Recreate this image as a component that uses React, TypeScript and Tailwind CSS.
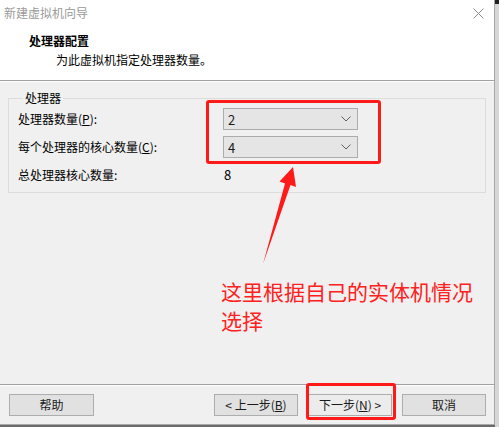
import React from 'react';

const Chevron = () => (
  <svg width="10" height="6" viewBox="0 0 10 6" className="mr-[6px]">
    <path d="M0.5 0.5 L5 5 L9.5 0.5" fill="none" stroke="#606060" strokeWidth="1" />
  </svg>
);

const Select = ({ value }: { value: string }) => (
  <div className="w-[135px] h-[22px] bg-[#e5e5e5] border border-[#acacac] flex items-center justify-between pl-[4px]">
    <span className="text-[13px] leading-none">{value}</span>
    <Chevron />
  </div>
);

const Btn = ({ children, className = '' }: { children: React.ReactNode; className?: string }) => (
  <button className={`w-[84px] h-[22px] border border-[#adadad] bg-[#e1e1e1] text-[12px] leading-none flex items-center justify-center ${className}`}>
    {children}
  </button>
);

const App = () => {
  return (
    <div className="relative w-[499px] h-[427px] flex bg-[#6b6b6b] font-['Microsoft_YaHei','Noto_Sans_CJK_SC',sans-serif] text-[#1a1a1a] overflow-hidden">
      {/* Window */}
      <div className="w-[495px] h-[425px] flex flex-col bg-[#f0f0f0] border-r border-b border-[#a8a8a8]">
        {/* Header */}
        <div className="h-[80px] bg-white flex flex-col">
          <div className="h-[26px] flex items-center justify-between pl-[4px] pr-[10px]">
            <span className="text-[12px] text-[#9a9a9a]">新建虚拟机向导</span>
            <svg width="11" height="11" viewBox="0 0 11 11">
              <path d="M0.5 0.5 L10.5 10.5 M10.5 0.5 L0.5 10.5" stroke="#8a8a8a" strokeWidth="1" />
            </svg>
          </div>
          <div className="pl-[29px] pt-[7px] text-[12px] leading-[16px] font-bold text-black">处理器配置</div>
          <div className="pl-[56px] mt-[3px] text-[12px] leading-[16px] text-black">为此虚拟机指定处理器数量。</div>
        </div>
        <div className="h-[1px] bg-[#a0a0a0]" />
        <div className="h-[1px] bg-white" />

        {/* Body */}
        <div className="flex-1 flex flex-col">
          <fieldset className="mt-[8px] mx-[8px] border border-[#dcdcdc] pl-[9px] pt-[2px] pb-[6px] flex flex-col gap-[6px]">
            <legend className="ml-[5px] px-[2px] text-[12px] leading-[16px] text-black">处理器</legend>
            <div className="h-[22px] flex items-center">
              <span className="w-[205px] text-[12px] text-black">
                处理器数量(<span className="underline">P</span>):
              </span>
              <Select value="2" />
            </div>
            <div className="h-[22px] flex items-center">
              <span className="w-[205px] text-[12px] text-black">
                每个处理器的核心数量(<span className="underline">C</span>):
              </span>
              <Select value="4" />
            </div>
            <div className="h-[22px] flex items-center">
              <span className="w-[205px] text-[12px] text-black">总处理器核心数量:</span>
              <span className="pl-[1px] text-[13px] text-black">8</span>
            </div>
          </fieldset>

          <div className="mt-[84px] pl-[221px] text-[21px] leading-[29px] text-[#ff2020]">
            这里根据自己的实体机情况
            <br />
            选择
          </div>

          <div className="flex-1" />

          {/* Footer */}
          <div className="h-[1px] bg-[#a0a0a0]" />
          <div className="h-[1px] bg-white" />
          <div className="flex items-center pl-[9px] pr-[8px] pt-[8px] pb-[8px]">
            <Btn className="w-[85px]">帮助</Btn>
            <div className="flex-1" />
            <Btn>
              &lt; 上一步(<span className="underline">B</span>)
            </Btn>
            <Btn className="ml-[10px] bg-[#ececec] border-[#0078d7]">
              下一步(<span className="underline">N</span>) &gt;
            </Btn>
            <Btn className="ml-[10px]">取消</Btn>
          </div>
        </div>
      </div>
      {/* Right strip of the desktop behind */}
      <div className="w-[4px] h-full flex flex-col bg-[#d6d6d6]">
        <div className="h-[4px] bg-[#202020]" />
      </div>

      {/* Annotations */}
      <div className="absolute left-[206px] top-[100px] w-[175px] h-[64px] border-[3px] border-[#ff1a1a] rounded-[3px]" />
      <div className="absolute left-[306px] top-[383px] w-[90px] h-[37px] border-[3px] border-[#ff1a1a] rounded-[3px]" />
      <svg className="absolute left-0 top-0" width="499" height="427" viewBox="0 0 499 427">
        <polygon
          points="293,167 296,187 290.5,185 263,264 285,183.5 279.5,181.5"
          fill="#ff1a1a"
        />
      </svg>
    </div>
  );
};

export default App;
